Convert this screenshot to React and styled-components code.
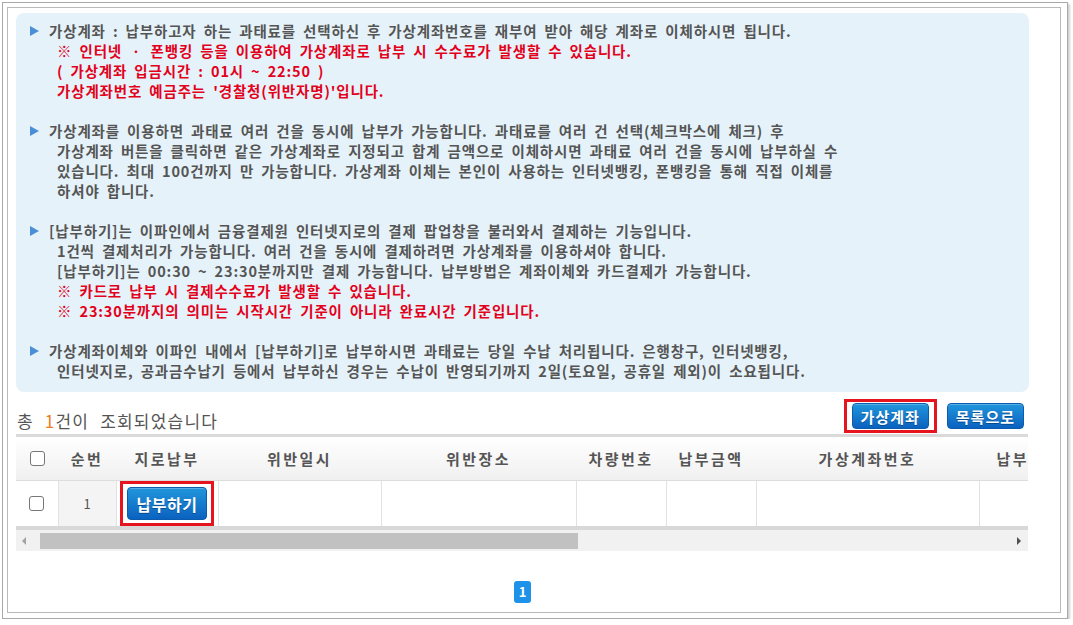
import React from "react";
import styled, { createGlobalStyle } from "styled-components";

const GlobalStyle = createGlobalStyle`
	body {
		margin: 0;
		background: #ffffff;
		font-family: "Noto Sans CJK KR", "Noto Sans", sans-serif;
	}
`;

const notices = [
	[
		{ text: "가상계좌 : 납부하고자 하는 과태료를 선택하신 후 가상계좌번호를 재부여 받아 해당 계좌로 이체하시면 됩니다." },
		{ text: "※ 인터넷 ㆍ 폰뱅킹 등을 이용하여 가상계좌로 납부 시 수수료가 발생할 수 있습니다.", red: true },
		{ text: "( 가상계좌 입금시간 : 01시 ~ 22:50 )", red: true },
		{ text: "가상계좌번호 예금주는 '경찰청(위반자명)'입니다.", red: true },
	],
	[
		{ text: "가상계좌를 이용하면 과태료 여러 건을 동시에 납부가 가능합니다. 과태료를 여러 건 선택(체크박스에 체크) 후" },
		{ text: "가상계좌 버튼을 클릭하면 같은 가상계좌로 지정되고 합계 금액으로 이체하시면 과태료 여러 건을 동시에 납부하실 수" },
		{ text: "있습니다. 최대 100건까지 만 가능합니다. 가상계좌 이체는 본인이 사용하는 인터넷뱅킹, 폰뱅킹을 통해 직접 이체를" },
		{ text: "하셔야 합니다." },
	],
	[
		{ text: "[납부하기]는 이파인에서 금융결제원 인터넷지로의 결제 팝업창을 불러와서 결제하는 기능입니다." },
		{ text: "1건씩 결제처리가 가능합니다. 여러 건을 동시에 결제하려면 가상계좌를 이용하셔야 합니다." },
		{ text: "[납부하기]는 00:30 ~ 23:30분까지만 결제 가능합니다. 납부방법은 계좌이체와 카드결제가 가능합니다." },
		{ text: "※ 카드로 납부 시 결제수수료가 발생할 수 있습니다.", red: true },
		{ text: "※ 23:30분까지의 의미는 시작시간 기준이 아니라 완료시간 기준입니다.", red: true },
	],
	[
		{ text: "가상계좌이체와 이파인 내에서 [납부하기]로 납부하시면 과태료는 당일 수납 처리됩니다. 은행창구, 인터넷뱅킹," },
		{ text: "인터넷지로, 공과금수납기 등에서 납부하신 경우는 수납이 반영되기까지 2일(토요일, 공휴일 제외)이 소요됩니다." },
	],
];

const columns = [
	{ key: "chk", width: 42 },
	{ key: "no", width: 58, label: "순번" },
	{ key: "giro", width: 102, label: "지로납부" },
	{ key: "date", width: 163, label: "위반일시" },
	{ key: "place", width: 195, label: "위반장소" },
	{ key: "car", width: 90, label: "차량번호" },
	{ key: "amount", width: 90, label: "납부금액" },
	{ key: "account", width: 223, label: "가상계좌번호" },
	{ key: "due", width: 100, label: "납부일자" },
];

export default function App() {
	return (
		<>
			<GlobalStyle />
			<Shot>
				<Panel>
					<Notice>
						{notices.map((lines, i) => (
							<Item key={i}>
								<Marker />
								<div>
									{lines.map((line, j) => (
										<Line key={j} $red={line.red} $sub={j > 0}>
											{line.text}
										</Line>
									))}
								</div>
							</Item>
						))}
					</Notice>

					<Toolbar>
						<Count>
							총 <Num>1</Num>건이 조회되었습니다
						</Count>
						<Actions>
							<Highlight $px={5} $py={1}>
								<BlueButton>가상계좌</BlueButton>
							</Highlight>
							<BlueButton>목록으로</BlueButton>
						</Actions>
					</Toolbar>

					<TableWrap>
						<Grid>
							<colgroup>
								{columns.map((c) => (
									<col key={c.key} style={{ width: c.width }} />
								))}
							</colgroup>
							<thead>
								<tr>
									{columns.map((c) => (
										<Th key={c.key}>{c.key === "chk" ? <Check type="checkbox" /> : c.label}</Th>
									))}
								</tr>
							</thead>
							<tbody>
								<tr>
									<Td>
										<Check type="checkbox" />
									</Td>
									<Td $shade>1</Td>
									<Td>
										<Highlight $px={4} $py={3}>
											<BlueButton $big>납부하기</BlueButton>
										</Highlight>
									</Td>
									<Td />
									<Td />
									<Td />
									<Td />
									<Td />
									<Td />
								</tr>
							</tbody>
						</Grid>
						<Scrollbar>
							<Arrow $dir="left" />
							<Rail>
								<Thumb />
							</Rail>
							<Arrow $dir="right" />
						</Scrollbar>
					</TableWrap>

					<Pager>
						<PageNo>1</PageNo>
					</Pager>
				</Panel>
			</Shot>
		</>
	);
}

const Shot = styled.div`
	box-sizing: border-box;
	width: 1066px;
	height: 617px;
	margin: 2px 0 0 2px;
	padding: 4px 6px 5px 4px;
	background: #ffffff;
	border: 1px solid #a8a8a8;
	box-shadow: 2px 2px 2px #cfcfcf;
`;

const Panel = styled.div`
	box-sizing: border-box;
	height: 100%;
	padding: 5px 31px 0 8px;
	border: 1px solid #b9b9b9;
	display: flex;
	flex-direction: column;
`;

const Notice = styled.div`
	background: #e5f2f9;
	border-radius: 8px;
	padding: 8px 0 11px 14px;
	display: flex;
	flex-direction: column;
	gap: 20px;
`;

const Item = styled.div`
	display: flex;
`;

const Marker = styled.span`
	flex: none;
	width: 0;
	height: 0;
	margin: 5px 10px 0 0;
	border-left: 9px solid #4a8fd6;
	border-top: 5px solid transparent;
	border-bottom: 5px solid transparent;
`;

const Line = styled.div`
	font-size: 14.5px;
	line-height: 20px;
	font-weight: 700;
	letter-spacing: 0.85px;
	word-spacing: 3px;
	white-space: nowrap;
	color: ${({ $red }) => ($red ? "#e3001b" : "#555555")};
	padding-left: ${({ $sub }) => ($sub ? 8 : 0)}px;
`;

const Toolbar = styled.div`
	height: 42px;
	display: flex;
	justify-content: space-between;
	align-items: flex-end;
	padding: 0 5px 1px 1px;
	box-sizing: border-box;
`;

const Count = styled.div`
	font-size: 17px;
	line-height: 22px;
	color: #555555;
	letter-spacing: 1.2px;
	word-spacing: 6px;
	margin-bottom: 1px;
`;

const Num = styled.span`
	color: #f07a1e;
	word-spacing: 0;
`;

const Actions = styled.div`
	display: flex;
	align-items: center;
	gap: 10px;
`;

const Highlight = styled.span`
	display: inline-flex;
	border: 3px solid #e5141e;
	padding: ${({ $py, $px }) => `${$py}px ${$px}px`};
`;

const BlueButton = styled.button`
	font-family: inherit;
	height: ${({ $big }) => ($big ? 33 : 26)}px;
	padding: 0 ${({ $big }) => ($big ? 9 : 8)}px;
	border: 1px solid #0b5cae;
	border-radius: 4px;
	background: linear-gradient(#2196dc, #0a62bf);
	color: #ffffff;
	font-size: ${({ $big }) => ($big ? 16 : 15)}px;
	font-weight: 700;
	letter-spacing: ${({ $big }) => ($big ? 0.5 : 1)}px;
	line-height: 1;
	text-shadow: 0 1px 0 rgba(0, 40, 90, 0.5);
	box-shadow: inset 0 1px 0 rgba(255, 255, 255, 0.25);
`;

const TableWrap = styled.div`
	width: 1012px;
	overflow: hidden;
	border-top: 3px solid #dadada;
`;

const Grid = styled.table`
	table-layout: fixed;
	border-collapse: collapse;
	width: 1063px;
`;

const Th = styled.th`
	height: 43px;
	padding: 0;
	background: linear-gradient(#ffffff, #f0f0f0);
	border-bottom: 1px solid #dddddd;
	color: #555555;
	font-size: 15px;
	font-weight: 700;
	letter-spacing: 2.5px;
	text-align: center;
	white-space: nowrap;
	vertical-align: middle;
`;

const Td = styled.td`
	height: 42px;
	padding: 0;
	text-align: center;
	vertical-align: middle;
	font-size: 13px;
	color: #555555;
	border-right: 1px solid #e2e2e2;
	background: ${({ $shade }) => ($shade ? "#f4f4f4" : "#ffffff")};
`;

const Check = styled.input`
	appearance: none;
	display: block;
	margin: 0 auto;
	width: 15px;
	height: 15px;
	border: 1px solid #777777;
	border-radius: 3px;
	background: #ffffff;
`;

const Scrollbar = styled.div`
	display: flex;
	align-items: center;
	height: 21px;
	background: #f1f1f1;
	border-top: 4px solid #d8d8d8;
`;

const Arrow = styled.span`
	flex: none;
	width: 0;
	height: 0;
	border-top: 4px solid transparent;
	border-bottom: 4px solid transparent;
	${({ $dir }) =>
		$dir === "left"
			? "border-right: 4px solid #a3a3a3; margin: 0 14px 0 6px;"
			: "border-left: 4px solid #505050; margin: 0 7px 0 8px;"}
`;

const Rail = styled.div`
	flex: 1;
	height: 16px;
	display: flex;
`;

const Thumb = styled.div`
	width: 538px;
	height: 16px;
	background: #c1c1c1;
`;

const Pager = styled.div`
	display: flex;
	justify-content: center;
	margin-top: 30px;
`;

const PageNo = styled.span`
	width: 17px;
	height: 22px;
	border-radius: 3px;
	background: #1e92e8;
	color: #ffffff;
	font-size: 13px;
	font-weight: 700;
	line-height: 22px;
	text-align: center;
`;
